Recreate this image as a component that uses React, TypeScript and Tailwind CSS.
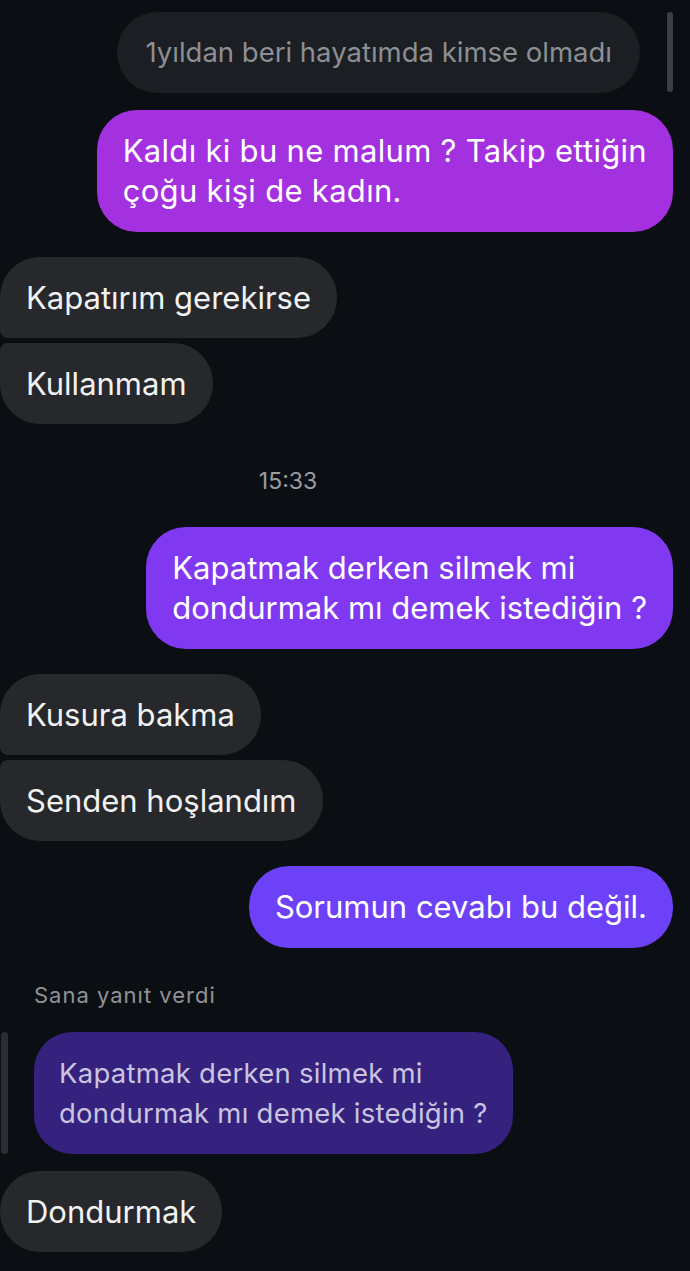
import React from 'react';

const font = { fontFamily: 'Inter, "Noto Sans", sans-serif' };

function Sent({ text, color, className = '', textClass = '' }: { text: React.ReactNode; color: string; className?: string; textClass?: string }) {
  return (
    <div className={`flex justify-end pr-[17px] ${className}`}>
      <div className={`rounded-[40px] px-[26px] py-[21px] text-[31px] leading-[40px] text-white ${color} ${textClass}`}>{text}</div>
    </div>
  );
}

function Received({ text, shape, className = '' }: { text: string; shape: string; className?: string }) {
  return (
    <div className={`flex justify-start ${className}`}>
      <div className={`bg-[#26282c] px-[26px] py-[20px] text-[31px] leading-[41px] text-[#f2f2f3] ${shape}`}>{text}</div>
    </div>
  );
}

export default function App() {
  return (
    <div className="relative min-h-[1271px] w-[690px] overflow-hidden bg-[#0b0f13] pt-[12px]" style={font}>
      {/* scroll indicator */}
      <div className="absolute right-[17px] top-[12px] h-[80px] w-[6px] rounded-full bg-[#3b3e43]" />

      <div className="flex justify-end pr-[50px]">
        <div className="rounded-full bg-[#1b1e22] px-[28px] py-[20px] text-[27.5px] leading-[41px] text-[#8c8f94]">
          1yıldan beri hayatımda kimse olmadı
        </div>
      </div>

      <Sent
        className="mt-[17px]"
        color="bg-[#a431e0]"
        textClass="tracking-[0.3px]"
        text={<>Kaldı ki bu ne malum ? Takip ettiğin<br />çoğu kişi de kadın.</>}
      />

      <Received className="mt-[25px]" shape="rounded-[40px] rounded-bl-[8px]" text="Kapatırım gerekirse" />
      <Received className="mt-[5px]" shape="rounded-[40px] rounded-tl-[8px]" text="Kullanmam" />

      <div className="mt-[45px] flex justify-center pr-[114px] text-[23px] leading-[24px] text-[#9a9da2]">15:33</div>

      <Sent
        className="mt-[34px]"
        color="bg-[#8038f0]"
        text={<>Kapatmak derken silmek mi<br />dondurmak mı demek istediğin ?</>}
      />

      <Received className="mt-[25px]" shape="rounded-[40px] rounded-bl-[8px]" text="Kusura bakma" />
      <Received className="mt-[5px]" shape="rounded-[40px] rounded-tl-[8px]" text="Senden hoşlandım" />

      <Sent className="mt-[25px]" color="bg-[#6c41f7]" text="Sorumun cevabı bu değil." />

      <div className="mt-[35px] pl-[34px] text-[22px] leading-[24px] tracking-[1px] text-[#8f9297]">Sana yanıt verdi</div>

      <div className="mt-[25px] flex items-stretch">
        <div className="ml-[1px] w-[7px] rounded-full bg-[#2a2d31]" />
        <div className="ml-[26px] rounded-[38px] bg-[#34227e] px-[25px] py-[21px] text-[27.5px] leading-[40px] tracking-[0.25px] text-[#c9c4df]">
          Kapatmak derken silmek mi
          <br />
          dondurmak mı demek istediğin ?
        </div>
      </div>

      <Received className="mt-[17px]" shape="rounded-[40px]" text="Dondurmak" />
    </div>
  );
}
